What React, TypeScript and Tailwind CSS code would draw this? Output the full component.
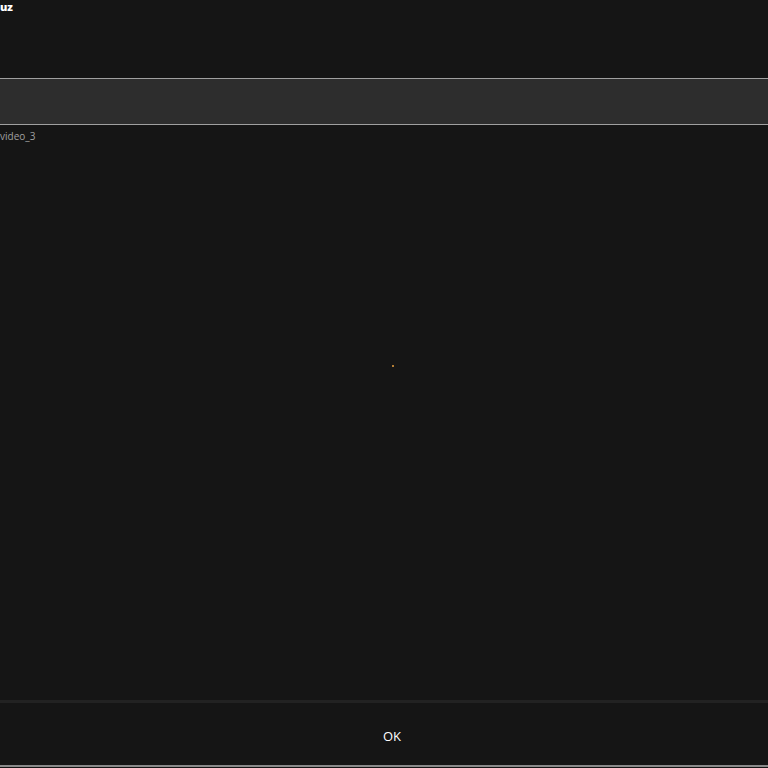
export default function App() {
  return (
    <div className="w-[768px] h-[768px] bg-[#151515] flex flex-col overflow-hidden" style={{ fontFamily: '"Open Sans", "Noto Sans", sans-serif' }}>
      {/* header */}
      <div className="h-[78px] shrink-0">
        <div className="text-[11px] font-extrabold text-white leading-[13px]">uz</div>
      </div>
      {/* search bar */}
      <div className="h-[47px] shrink-0 bg-[#2d2d2d] border-y border-[#a0a0a0]" />
      {/* list */}
      <div className="flex-1 flex flex-col">
        <div className="text-[10px] text-[#a0a0a0] leading-[14px] mt-[4px]">video_3</div>
        <div className="flex justify-center pl-[17px] mt-[222px]">
          <div className="w-[2px] h-[2px] rounded-full bg-[#e8a040]" />
        </div>
      </div>
      {/* footer */}
      <div className="h-[3px] shrink-0 bg-[#222222]" />
      <div className="h-[62px] shrink-0 flex items-center justify-center pl-[16px] pt-[5px]">
        <span className="text-[13px] text-white">OK</span>
      </div>
      <div className="h-[2px] shrink-0 bg-[#8a8a8a]" />
      <div className="h-[1px] shrink-0 bg-[#151515]" />
    </div>
  )
}
